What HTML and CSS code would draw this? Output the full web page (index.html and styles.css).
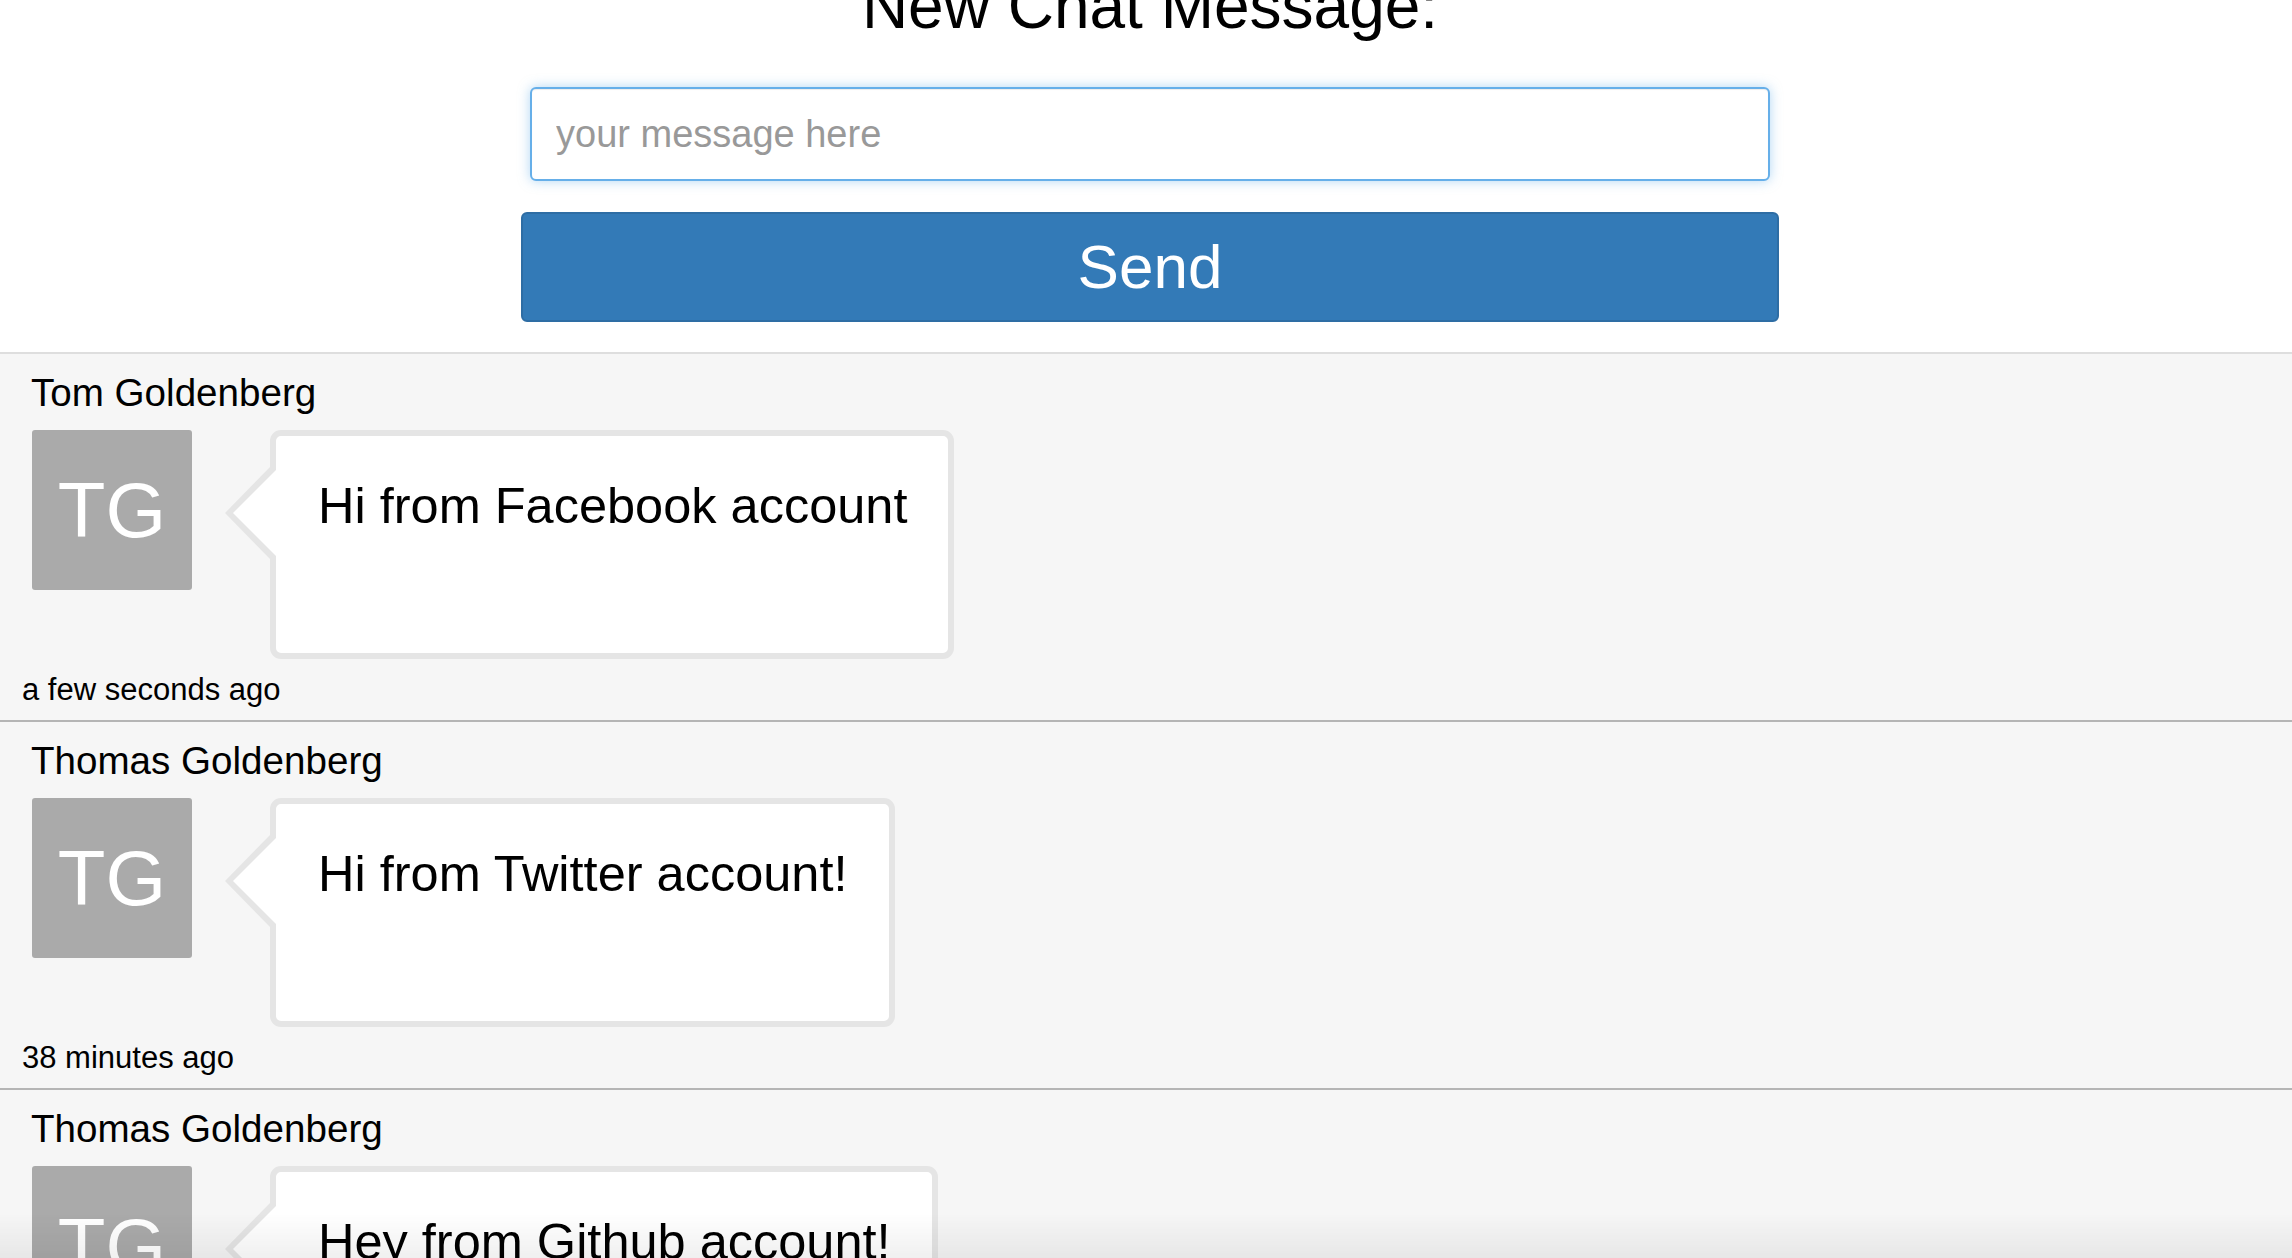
FILE: index.html
```html
<!DOCTYPE html>
<html lang="en">
<head>
<meta charset="utf-8">
<title>Chat</title>
<link rel="stylesheet" href="styles.css">
</head>
<body>
<header class="compose">
  <div class="compose-inner">
    <h1 class="compose-title">New Chat Message:</h1>
    <input class="compose-input" type="text" placeholder="your message here" autofocus>
    <button class="compose-send" type="button">Send</button>
  </div>
</header>
<ul class="feed">
  <li class="post">
    <div class="post-author">Tom Goldenberg</div>
    <div class="post-body">
      <div class="avatar">TG</div>
      <div class="bubble"><p class="bubble-text">Hi from Facebook account</p></div>
    </div>
    <div class="post-time">a few seconds ago</div>
  </li>
  <li class="post">
    <div class="post-author">Thomas Goldenberg</div>
    <div class="post-body">
      <div class="avatar">TG</div>
      <div class="bubble"><p class="bubble-text">Hi from Twitter account!</p></div>
    </div>
    <div class="post-time">38 minutes ago</div>
  </li>
  <li class="post">
    <div class="post-author">Thomas Goldenberg</div>
    <div class="post-body">
      <div class="avatar">TG</div>
      <div class="bubble"><p class="bubble-text">Hey from Github account!</p></div>
    </div>
    <div class="post-time">an hour ago</div>
  </li>
</ul>
<div class="bottom-shade"></div>
</body>
</html>
```
FILE: styles.css
```css
html, body {
  margin: 0;
  padding: 0;
}

body {
  font-family: "Liberation Sans", Arial, Helvetica, sans-serif;
  color: #000;
  background: #f6f6f6;
  overflow: hidden;
}

.compose {
  background: #fff;
  padding: 0 0 30px 8px;
}

.compose-inner {
  width: 1258px;
  margin: 0 auto;
  display: flex;
  flex-direction: column;
  align-items: center;
}

.compose-title {
  margin: -29px 0 0;
  font-size: 64px;
  line-height: 70px;
  font-weight: normal;
  text-align: center;
}

.compose-input {
  margin-top: 46px;
  width: 1240px;
  height: 94px;
  box-sizing: border-box;
  border: 2px solid #66afe9;
  border-radius: 6px;
  padding: 0 24px;
  font-family: inherit;
  font-size: 38px;
  color: #555;
  caret-color: #333;
  background: #fff;
  outline: none;
  box-shadow: inset 0 1px 1px rgba(0, 0, 0, 0.075), 0 0 12px rgba(102, 175, 233, 0.5);
}

.compose-input::placeholder {
  color: #999;
}

.compose-send {
  margin-top: 31px;
  width: 1258px;
  height: 110px;
  box-sizing: border-box;
  border: 2px solid #2e6da4;
  border-radius: 6px;
  background: #337ab7;
  color: #fff;
  font-family: inherit;
  font-size: 62px;
  line-height: 1;
  padding: 0;
}

.feed {
  list-style: none;
  margin: 0;
  padding: 0;
  background: #f6f6f6;
  border-top: 2px solid #dedede;
}

.post {
  padding: 17px 0 12px;
  border-bottom: 2px solid #b5b5b5;
}

.post-author {
  font-size: 38.6px;
  line-height: 44px;
  padding-left: 31px;
}

.post-body {
  display: flex;
  align-items: flex-start;
  margin-top: 15px;
  padding-left: 32px;
}

.avatar {
  flex: 0 0 auto;
  width: 160px;
  height: 160px;
  border-radius: 3px;
  background: #aaaaaa;
  color: #fff;
  font-size: 78px;
  line-height: 78px;
  display: flex;
  align-items: center;
  justify-content: center;
}

.bubble {
  position: relative;
  margin-left: 78px;
  height: 229px;
  box-sizing: border-box;
  border: 6px solid #e5e5e5;
  border-radius: 11px;
  background: #fff;
  padding: 0 41px 0 42px;
}

.bubble::before {
  content: "";
  position: absolute;
  left: -51px;
  top: 31px;
  width: 0;
  height: 0;
  border-top: 46px solid transparent;
  border-bottom: 46px solid transparent;
  border-right: 45px solid #e5e5e5;
}

.bubble::after {
  content: "";
  position: absolute;
  left: -43px;
  top: 32px;
  width: 0;
  height: 0;
  border-top: 45px solid transparent;
  border-bottom: 45px solid transparent;
  border-right: 45px solid #fff;
}

.bubble-text {
  margin: 40px 0 0;
  font-size: 50.5px;
  line-height: 60px;
  white-space: nowrap;
}

.post-time {
  margin-top: 13px;
  padding-left: 22px;
  font-size: 31px;
  line-height: 36px;
}

.bottom-shade {
  position: fixed;
  left: 0;
  right: 0;
  bottom: 0;
  height: 45px;
  background: linear-gradient(to bottom, rgba(0, 0, 0, 0), rgba(0, 0, 0, 0.06));
  pointer-events: none;
}
```
